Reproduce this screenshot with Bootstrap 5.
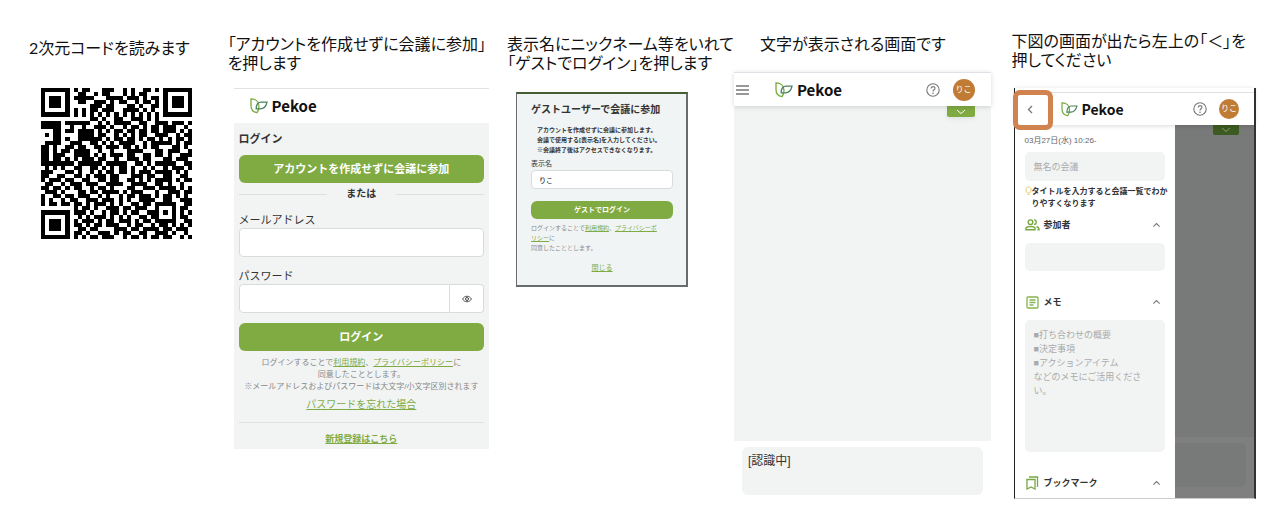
<!DOCTYPE html>
<html lang="ja">
<head>
<meta charset="utf-8">
<meta name="viewport" content="width=device-width, initial-scale=1">
<title>Pekoe 参加手順</title>
<link href="https://cdn.jsdelivr.net/npm/bootstrap@5.3.0/dist/css/bootstrap.min.css" rel="stylesheet">
<style>
:root{--leaf:#80ab43;--mist:#f2f4f4;--ink:#333}
body{font-family:"Liberation Sans","Noto Sans CJK JP",sans-serif;background:#fff;color:var(--ink)}
button,input,textarea{font-family:inherit}
.steps{display:grid;grid-template-columns:228fr 280fr 225fr 267fr 280fr}
.caption-text{font:400 16px/19px Lato,"Noto Sans CJK JP",sans-serif;font-feature-settings:"palt";color:#111;white-space:nowrap;margin:0;padding-top:34px}
.caption-scan{padding:38px 0 0 29px}
.caption-view{padding-left:26px}
.caption-back{padding:31px 0 0 11px}
.qr{width:151px;height:151px;margin:31px 0 0 41px}
.brand{font:700 15px/20px "Noto Sans CJK JP",sans-serif;color:#111}
.f6{font-size:6px;line-height:10px}.f7{font-size:7px;line-height:10px}
.f8{font-size:8px;line-height:12px}.f9{font-size:9px;line-height:14px}
.f10{font-size:10px;line-height:14px}.f11{font-size:11px;line-height:16px}
.leaf-btn{background:var(--leaf);color:#fff;border:0;border-radius:6px;font-weight:700;display:block;width:100%;height:28px;padding:0}
.leaf-btn:hover{background:#729b3a}
.leaf-link,.leaf-link:hover{color:var(--leaf)}
.box{border:1px solid #d9dcdc;background:#fff;border-radius:4px;width:100%;height:29px;display:block}
.muted{color:#888}
.topbar{height:34px;background:#fff}
.raised{box-shadow:0 1px 5px rgba(0,0,0,.15);position:relative}
.panel-bg{background:var(--mist)}
.icon-btn{background:none;border:0;padding:0;line-height:0;color:#777}
.avatar{width:22px;height:22px;border-radius:50%;background:#c07c35;color:#fff;font-size:8px;line-height:22px;text-align:center;margin:0 16px 0 13px}
.login{margin:16px 18px 0 6px;border-top:1px solid #e2e2e2}
.login-form{padding:8px 5px 3px}
.or-row{padding:4px 0}
.or-line{flex:1;height:1px;background:#dde0e0;max-width:88px}
.mail-label{margin-top:7px}
.pass-label{margin-top:11px}
.eye-btn{width:34px;flex:none}
.login-btn{margin-top:10px}
.terms{padding-top:6px}
.forgot{padding:5px 0 10px}
.signup{padding-top:9px}
.guest{margin:20px 46px 0 9px;border:2px solid #686c6c;border-top-color:#455d32;background:#f1f4f4;border-left-width:1px;padding:9px 13px 12px 14px}
.guest-note{padding:8px 0 4px 6px}
.guest-name{height:19px;padding:0 7px;margin-top:1px}
.guest-btn{height:18px;margin-top:12px}
.guest-close{padding-top:10px}
.screen{margin:19px 10px 0 0}
.menu-btn{padding-left:2px}
.screen-brand{margin-left:26px}
.stage{height:335px}
.tab{width:28px;height:11px;background:var(--leaf);color:#fff;border-radius:0 0 2px 2px;line-height:0;margin-right:16px}
.recog{margin:6px 8px 0;height:48px;border-radius:6px;padding:6px;font-size:12px;line-height:17px}
.phone{margin:19px 24px 0 13px;border-left:1px solid #222;border-right:2px solid #333;border-bottom:1px solid #ccc;position:relative}
.phone-head{padding-top:4px}
.phone .topbar{height:33px}
.phone .brand{font-size:14px}
.phone .avatar{width:20px;height:20px;line-height:20px;margin:0 15px 0 12px}
.back-btn{margin-left:12px}
.phone-brand{margin-left:28px}
.focus-box{position:absolute;left:-2px;top:2px;width:40px;height:40px;border:5px solid #d0834f;border-radius:7px;z-index:3}
.drawer{width:160px;padding:10px 10px 0;flex:none;height:373px}
.date{color:#666}
.shade{background:#787a79}
.gray-box{background:var(--mist);border:0;border-radius:5px;width:100%;display:block;padding:0 9px;resize:none;overflow:hidden}
.gray-box::placeholder{color:#aaa;opacity:1}
.meeting-name{height:29px;margin-top:5px}
.tip{padding:5px 0 8px}
.people{height:28px;margin-top:11px}
.memo{height:132px;margin-top:11px;padding-top:8px}
.drawer-section{margin-top:24px}
.section-name{font-size:9px;line-height:14px;font-weight:700;margin:0}
.tab-dim{background:#3d5b20;color:#889975;width:26px;height:10px;margin-right:15px}
.shade-foot{background:#7f7f7f;padding:6px 8px 11px 0}
.shade-box{height:44px;border-radius:0 6px 6px 0}
</style>
</head>
<body>
<svg class="d-none" xmlns="http://www.w3.org/2000/svg">
 <symbol id="leaf" viewBox="0 0 19 17"><path d="M1 1C6 1 9.500 4 9.500 9c0 3-1 5-2 6.500C3 15 1 12 1 8Z" fill="none" stroke="#78ad3e" stroke-width="1.400"/><path d="M18 4.500h-6C8.500 4.500 6.500 7 6.500 11.500H11c4 0 6-3 7-7Z" fill="none" stroke="#4a8260" stroke-width="1.300"/></symbol>
 <symbol id="help" viewBox="0 0 14 14"><g fill="none" stroke="currentColor" stroke-width="1.100"><circle cx="7" cy="7" r="6.200"/><path d="M5.100 5.600C5.100 3 9 3 9 5.300 9 6.800 7 6.800 7 8.500"/></g><circle cx="7" cy="10.200" r=".8" fill="currentColor"/></symbol>
 <symbol id="up" viewBox="0 0 10 6"><path d="M1.500 4.800 5 1.400l3.500 3.400" fill="none" stroke="currentColor" stroke-width="1.200"/></symbol>
 <symbol id="down" viewBox="0 0 12 6"><path d="m2 1 4 3.500L10 1" fill="none" stroke="currentColor"/></symbol>
</svg>
<main class="steps">
 <section>
  <h2 class="caption-text caption-scan">2次元コードを読みます</h2>
  <svg id="code" class="qr d-block" role="img" aria-label="2次元コード" viewBox="0 0 37 37" shape-rendering="crispEdges"></svg>
 </section>

 <section>
  <h2 class="caption-text">「アカウントを作成せずに会議に参加」<br>を押します</h2>
  <div class="login">
   <div class="topbar d-flex align-items-center gap-1 ps-3"><svg width="18" height="16"><use href="#leaf"/></svg><span class="brand">Pekoe</span></div>
   <form class="panel-bg login-form">
    <h3 class="f11 fw-bold m-0 mb-2">ログイン</h3>
    <button type="button" class="leaf-btn f11">アカウントを作成せずに会議に参加</button>
    <div class="or-row d-flex align-items-center justify-content-between f10 fw-bold"><span class="or-line"></span>または<span class="or-line"></span></div>
    <label class="mail-label f11 d-block" for="mail">メールアドレス</label>
    <input id="mail" type="email" class="box">
    <label class="pass-label f11 d-block" for="pass">パスワード</label>
    <div class="d-flex"><input id="pass" type="password" class="box rounded-end-0"><button type="button" class="box eye-btn rounded-start-0 border-start-0 p-0 d-flex align-items-center justify-content-center" aria-label="表示"><svg width="10" height="8" viewBox="0 0 10 8"><path d="M.6 4C2.500.3 7.500.3 9.400 4 7.500 7.700 2.500 7.700.6 4Z" fill="none" stroke="#555"/><circle cx="5" cy="4" r="1.500" fill="none" stroke="#444"/></svg></button></div>
    <button type="button" class="leaf-btn login-btn f11">ログイン</button>
    <p class="terms f8 muted text-center text-nowrap m-0">ログインすることで<a class="leaf-link" href="#">利用規約</a>、<a class="leaf-link" href="#">プライバシーポリシー</a>に<br>同意したこととします。<br>※メールアドレスおよびパスワードは大文字/小文字区別されます</p>
    <p class="forgot f10 text-center m-0"><a class="leaf-link" href="#">パスワードを忘れた場合</a></p>
    <p class="signup f9 fw-bold text-center m-0 border-top"><a class="leaf-link" href="#">新規登録はこちら</a></p>
   </form>
  </div>
 </section>

 <section>
  <h2 class="caption-text">表示名にニックネーム等をいれて<br>「ゲストでログイン」を押します</h2>
  <form class="guest">
   <h3 class="f10 fw-bold m-0 text-nowrap">ゲストユーザーで会議に参加</h3>
   <p class="guest-note f6 fw-bold m-0 text-nowrap">アカウントを作成せずに会議に参加します。<br>会議で使用する[表示名]を入力してください。<br>※会議終了後はアクセスできなくなります。</p>
   <label class="f7 d-block" for="nick">表示名</label>
   <input id="nick" class="box guest-name f7" value="りこ">
   <button type="button" class="leaf-btn guest-btn f7">ゲストでログイン</button>
   <p class="f6 muted m-0 text-nowrap pt-1">ログインすることで<a class="leaf-link" href="#">利用規約</a>、<a class="leaf-link" href="#">プライバシーポ<br>リシー</a>に<br>同意したこととします。</p>
   <p class="guest-close f7 text-center m-0"><a class="leaf-link" href="#">閉じる</a></p>
  </form>
 </section>

 <section>
  <h2 class="caption-text caption-view">文字が表示される画面です</h2>
  <div class="screen">
   <div class="raised">
    <div class="topbar d-flex align-items-center border-top">
     <button class="icon-btn menu-btn" aria-label="メニュー"><svg width="13" height="12" viewBox="0 0 13 12"><path d="M0 2h13M0 6h13M0 10h13" stroke="currentColor" stroke-width="1.300"/></svg></button>
     <span class="screen-brand d-flex align-items-center gap-1"><svg width="18" height="16"><use href="#leaf"/></svg><span class="brand">Pekoe</span></span>
     <button class="icon-btn ms-auto" aria-label="ヘルプ"><svg width="14" height="14"><use href="#help"/></svg></button><span class="avatar">りこ</span>
    </div>
   </div>
   <div class="stage panel-bg d-flex justify-content-end"><button class="icon-btn tab shadow-sm" aria-label="開く"><svg width="12" height="6"><use href="#down"/></svg></button></div>
   <div class="recog panel-bg">[認識中]</div>
  </div>
 </section>

 <section>
  <h2 class="caption-text caption-back">下図の画面が出たら左上の「＜」を<br>押してください</h2>
  <div class="phone">
   <div class="focus-box"></div>
   <div class="raised phone-head bg-white"><div class="topbar d-flex align-items-center border-top">
    <button class="icon-btn back-btn" aria-label="戻る"><svg width="6" height="9" viewBox="0 0 6 9"><path d="M5 1 1.500 4.500 5 8" fill="none" stroke="currentColor" stroke-width="1.300"/></svg></button>
    <span class="phone-brand d-flex align-items-center gap-1"><svg width="17" height="15"><use href="#leaf"/></svg><span class="brand">Pekoe</span></span>
    <button class="icon-btn ms-auto" aria-label="ヘルプ"><svg width="14" height="14"><use href="#help"/></svg></button><span class="avatar">りこ</span>
   </div></div>
   <div class="d-flex">
    <div class="drawer">
     <p class="date f8 m-0 text-nowrap">03月27日(水) 10:26-</p>
     <input class="gray-box meeting-name f9" aria-label="会議名" placeholder="無名の会議">
     <div class="tip d-flex f8 fw-bold text-nowrap"><svg width="7" height="10" viewBox="0 0 7 10" class="flex-shrink-0"><path d="M2.500 7C0 5 .5 1 3.500 1s3.500 4 1 6Zm0 1.500h2" fill="none" stroke="#e6cc68"/></svg><span>タイトルを入力すると会議一覧でわか<br>りやすくなります</span></div>
     <div class="d-flex align-items-center"><svg width="15" height="12" viewBox="0 0 15 12"><g fill="none" stroke="#78a842" stroke-width="1.400"><circle cx="5.500" cy="3.200" r="2.300"/><path d="M1 10.800V9c1-2 8-2 9 0v1.800ZM9 1c3-.8 3 4.800 0 4.300M11.500 7.500c2 .7 2.500 1.500 2.500 3.300h-1.500"/></g></svg><h3 class="section-name ms-1">参加者</h3><button class="icon-btn ms-auto me-1" aria-label="閉じる"><svg width="9" height="6"><use href="#up"/></svg></button></div>
     <input class="gray-box people f9" aria-label="参加者">
     <div class="drawer-section d-flex align-items-center"><svg width="15" height="13" viewBox="0 0 15 13"><g fill="none" stroke="#85b451" stroke-width="1.300"><rect x="2" y="1" width="11" height="11" rx="1"/><path d="M4.500 4h6M4.500 6.500h6M4.500 9h4"/></g></svg><h3 class="section-name ms-1">メモ</h3><button class="icon-btn ms-auto me-1" aria-label="閉じる"><svg width="9" height="6"><use href="#up"/></svg></button></div>
     <textarea class="gray-box memo f9" aria-label="メモ" placeholder="■打ち合わせの概要&#10;■決定事項&#10;■アクションアイテム&#10;などのメモにご活用くださ&#10;い。"></textarea>
     <div class="drawer-section d-flex align-items-center"><svg width="15" height="14" viewBox="0 0 15 14"><path d="M2 3.500h8V13L6 11l-4 2ZM4 1h8.500v10" fill="none" stroke="#78a842" stroke-width="1.300"/></svg><h3 class="section-name ms-1">ブックマーク</h3><button class="icon-btn ms-auto me-1" aria-label="閉じる"><svg width="9" height="6"><use href="#up"/></svg></button></div>
    </div>
    <div class="shade flex-grow-1 d-flex flex-column">
     <button class="icon-btn tab tab-dim align-self-end" aria-label="開く"><svg width="12" height="6"><use href="#down"/></svg></button>
     <div class="shade-foot mt-auto"><div class="shade shade-box"></div></div>
    </div>
   </div>
  </div>
 </section>
</main>
<script src="https://cdn.jsdelivr.net/npm/bootstrap@5.3.0/dist/js/bootstrap.bundle.min.js"></script>
<script>
const rows = `
1111111010110001110010100110101111111
1000001001100101100010101100001000001
1011101011111000111101110101101011101
1011101001100111010110010110101011101
1011101000001110110001101001101011101
1000001010101101110011110101001000001
1111111010101010101010101010101111111
0000000000001101001100111010100000000
1111101111110010101111001100111011101
1111100100100111010010110101101110010
0001101101111010101101101101101110101
0101100001111011001010101100111001011
0001101001111110101101101011010101101
0111100111001101010111100101111101011
1101001101100110111011010101100011010
1101011011110010010001111000110111001
1101110011110101011101100110110100111
1101101010111011001001110110001101110
1111111101111110111110011010111110011
0101010011001101010110100101001011101
1110001101001010110110101110111101010
1100110011010111011000111011001100110
1011101100110011011001101010111101011
0110010111011100111100111100110100100
1101101011001011010001100111011110101
0111010001101101111010111000100111011
1001101101110010100101101110101101010
1010010110011101110101001111001100111
1011011011010111010100110110111110011
0000000010110100111011011100100010110
1111111011101001011010110011101010101
1000001001010111010101001101100010110
1011101010111010110111010110111110011
1011101011010110111001011001011010101
1011101001101100001110110111101101110
1000001011010011101011001100111010010
1111111010101101110010110101101100101`.trim().split('\n');
let d = '';
rows.forEach((row, y) => [...row].forEach((bit, x) => { if (bit === '1') d += `M${x} ${y}h1v1h-1z`; }));
const path = document.createElementNS('http://www.w3.org/2000/svg', 'path');
path.setAttribute('d', d);
document.getElementById('code').append(path);
</script>
</body>
</html>
